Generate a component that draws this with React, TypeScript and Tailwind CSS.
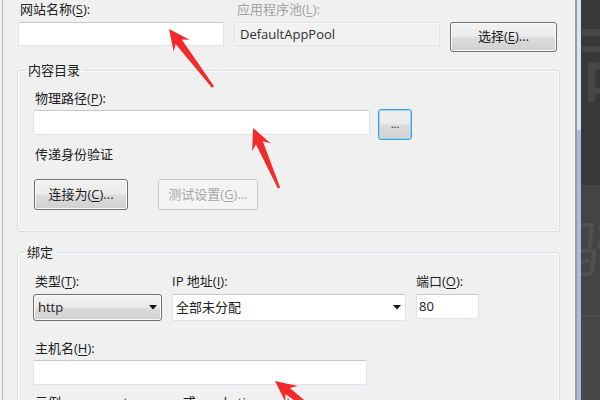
import React from "react";

// Win7-style dialog: site settings (name, app pool, physical path, binding)

const FONT = '"Open Sans", "Noto Sans CJK SC", sans-serif';

function Key({ k }: { k: string }) {
  return <span className="underline underline-offset-[2px]">{k}</span>;
}

function Label({ text, k, tail = "):", className = "" }: { text: string; k: string; tail?: string; className?: string }) {
  return (
    <div className={"h-[18px] leading-[18px] whitespace-nowrap " + className}>
      {text}(<Key k={k} />{tail}
    </div>
  );
}

const face =
  "border border-[#707070] rounded-[3px] shadow-[inset_0_0_0_1px_#fbfbfb] bg-[linear-gradient(#f2f2f2_0%,#ebebeb_48%,#dddddd_52%,#d0d0d0_100%)] whitespace-nowrap";
const btn = "flex items-center justify-center " + face;

const textBox =
  "bg-white border border-[#dfe2e8] border-t-[#c6c8ce] rounded-[2px]";

function DropArrow() {
  return (
    <svg width="8" height="5" viewBox="0 0 8 5" className="shrink-0">
      <polygon points="0,0 8,0 4,4.5" fill="#111" />
    </svg>
  );
}

// red callout arrow: tip -> tail, barbed head with a tapering shaft
function arrowPoints(tx: number, ty: number, bx: number, by: number, H = 21, W = 10) {
  const dx = bx - tx;
  const dy = by - ty;
  const len = Math.hypot(dx, dy);
  const ux = dx / len;
  const uy = dy / len;
  const nx = -uy;
  const ny = ux;
  const p = (a: number, b: number) => `${(tx + ux * a + nx * b).toFixed(1)},${(ty + uy * a + ny * b).toFixed(1)}`;
  return [p(0, 0), p(H, W), p(H - 5, 3.8), p(len, 1.2), p(len, -1.2), p(H - 5, -3.8), p(H, -W)].join(" ");
}

export default function App() {
  return (
    <div
      className="relative w-[600px] h-[400px] overflow-hidden flex bg-[#f0f0f0] text-[13px] text-[#202020]"
      style={{ fontFamily: FONT }}
    >
      {/* dialog body */}
      <div className="w-[575px] shrink-0 h-full pl-[2px]">
        <div className="h-full border-l border-[#b8b8b8] pl-[14px]">
          {/* site name / app pool */}
          <div className="flex items-start ml-[1px]">
            <div className="w-[206px]">
              <Label text="网站名称" k="S" className="pl-[2px]" />
              <div className={textBox + " mt-[4px] h-[24px]"} />
            </div>
            <div className="w-[206px] ml-[10px]">
              <Label text="应用程序池" k="L" className="pl-[3px] text-[#a3a3a3]" />
              <div className="mt-[4px] h-[24px] border border-[#dfe3e8] rounded-[2px] bg-[#f1f1f1] shadow-[inset_0_0_0_1px_#fafafa] pl-[5px] leading-[22px] text-[#303030]">
                DefaultAppPool
              </div>
            </div>
            <button className={btn + " ml-[10px] mt-[22px] w-[107px] h-[30px]"}>
              选择(<Key k="E" />)...
            </button>
          </div>

          {/* content directory */}
          <fieldset className="mt-[9px] w-[543px] border border-[#d5dfe5] rounded-[3px] shadow-[inset_0_0_0_1px_#fafcfd]">
            <legend className="ml-[7px] px-[3px] leading-[18px]">内容目录</legend>
            <div className="px-[15px] pt-[10px] pb-[21px]">
              <Label text="物理路径" k="P" className="pl-[2px]" />
              <div className="flex items-start mt-[3px]">
                <div className={textBox + " w-[337px] h-[25px]"} />
                <button className="ml-[8px] -mt-[1px] w-[34px] h-[31px] flex items-center justify-center rounded-[3px] border border-[#3aa0dc] shadow-[inset_0_0_0_1px_#9ad7f5] bg-[linear-gradient(#f0f0f0_0%,#eaeaea_48%,#dcdcdc_52%,#d2d2d2_100%)] text-[11px] leading-none pb-[2px]">
                  ...
                </button>
              </div>
              <div className="mt-[5px] h-[18px] leading-[18px] pl-[2px]">传递身份验证</div>
              <div className="flex mt-[16px] ml-[1px]">
                <button className={btn + " w-[94px] h-[31px]"}>
                  连接为(<Key k="C" />)...
                </button>
                <button className="ml-[30px] w-[100px] h-[31px] flex items-center justify-center border border-[#c5c9cc] rounded-[3px] bg-[#f4f4f4] text-[#a6a6a6] whitespace-nowrap">
                  测试设置(<Key k="G" />)...
                </button>
              </div>
            </div>
          </fieldset>

          {/* binding */}
          <fieldset className="mt-[11px] w-[543px] border border-[#d5dfe5] rounded-[3px] shadow-[inset_0_0_0_1px_#fafcfd]">
            <legend className="ml-[6px] px-[3px] leading-[18px]">绑定</legend>
            <div className="px-[15px] pt-[11px]">
              <div className="flex items-start">
                <div className="w-[129px]">
                  <Label text="类型" k="T" className="pl-[2px]" />
                  <div className={face + " mt-[4px] h-[27px] flex items-center justify-between pl-[4px] pr-[4px]"}>
                    <span>http</span>
                    <DropArrow />
                  </div>
                </div>
                <div className="w-[234px] ml-[10px]">
                  <Label text="IP 地址" k="I" />
                  <div className={textBox + " mt-[4px] h-[27px] flex items-center justify-between pl-[3px] pr-[4px]"}>
                    <span>全部未分配</span>
                    <DropArrow />
                  </div>
                </div>
                <div className="w-[63px] ml-[10px]">
                  <Label text="端口" k="O" />
                  <div className={textBox + " mt-[4px] h-[25px] pl-[2px] leading-[23px]"}>80</div>
                </div>
              </div>
              <Label text="主机名" k="H" className="mt-[18px] pl-[2px]" />
              <div className={textBox + " mt-[3px] w-[334px] h-[25px]"} />
              <div className="mt-[8px] pl-[2px] h-[18px] leading-[18px] text-[#202020]">
                示例: www.contoso.com 或 marketing.contoso.com
              </div>
            </div>
          </fieldset>
        </div>
      </div>

      {/* window frame edge */}
      <div className="w-[2px] shrink-0 bg-[#9c9c9c]" />
      <div className="w-[4px] shrink-0 flex flex-col">
        <div className="h-[130px] bg-[#d6e4f3]" />
        <div className="flex-1 bg-[#a6bedb]" />
      </div>

      {/* desktop behind the dialog */}
      <div className="flex-1 flex flex-col overflow-hidden">
        <div className="h-[185px] bg-[#383838] overflow-hidden">
          <div className="mt-[14px] -ml-[8px] text-[96px] leading-none text-[#474747]" style={{ fontFamily: '"Noto Sans CJK SC", sans-serif' }}>
            司
          </div>
        </div>
        <div className="h-[130px] bg-[#444444] overflow-hidden">
          <div className="mt-[30px] -ml-[10px] text-[60px] leading-none text-[#515151]" style={{ fontFamily: '"Noto Sans CJK SC", sans-serif' }}>
            骑
          </div>
        </div>
        <div className="flex-1 bg-[#474747] border-t border-[#525252]" />
      </div>

      {/* red callout arrows */}
      <svg className="absolute inset-0 pointer-events-none" width="600" height="400">
        <polygon points={arrowPoints(169, 29, 213, 87)} fill="#f42a2a" />
        <polygon points={arrowPoints(253, 128, 279, 188)} fill="#f42a2a" />
        <polygon points={arrowPoints(275, 381, 335, 428)} fill="#f42a2a" />
      </svg>
    </div>
  );
}
